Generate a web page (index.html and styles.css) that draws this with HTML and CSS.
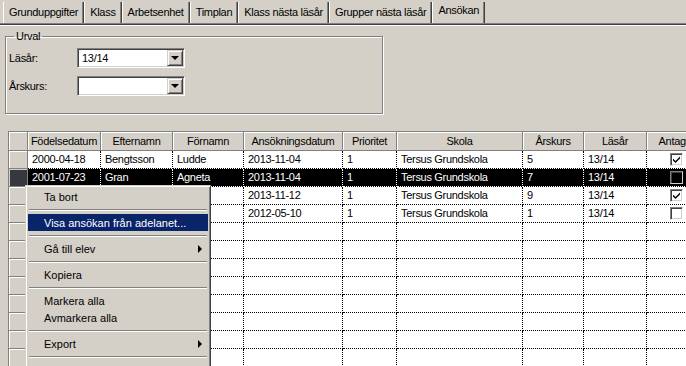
FILE: index.html
```html
<!DOCTYPE html>
<html lang="sv">
<head>
<meta charset="UTF-8">
<title>Ansökan</title>
<link rel="stylesheet" href="styles.css">
</head>
<body>
<div class="tabs">
  <span class="tab">Grunduppgifter</span>
  <span class="tab">Klass</span>
  <span class="tab">Arbetsenhet</span>
  <span class="tab">Timplan</span>
  <span class="tab">Klass nästa läsår</span>
  <span class="tab">Grupper nästa läsår</span>
  <span class="tab tab-active">Ansökan</span>
</div>

<div class="page">
  <fieldset class="urval">
    <legend>Urval</legend>
    <div class="field">
      <label>Läsår:</label>
      <div class="combo"><span class="combo-text">13/14</span><span class="combo-btn"></span></div>
    </div>
    <div class="field">
      <label>Årskurs:</label>
      <div class="combo"><span class="combo-text"></span><span class="combo-btn"></span></div>
    </div>
  </fieldset>

  <div class="grid">
    <div class="row head">
      <div class="sel"></div>
      <div>Födelsedatum</div>
      <div>Efternamn</div>
      <div>Förnamn</div>
      <div>Ansökningsdatum</div>
      <div>Prioritet</div>
      <div>Skola</div>
      <div>Årskurs</div>
      <div>Läsår</div>
      <div>Antaget</div>
    </div>
    <div class="row">
      <div class="sel"></div>
      <div>2000-04-18</div><div>Bengtsson</div><div>Ludde</div><div>2013-11-04</div>
      <div>1</div><div>Tersus Grundskola</div><div>5</div><div>13/14</div>
      <div class="center"><span class="chk checked"><svg width="9" height="9" viewBox="0 0 9 9"><path d="M1 3.5 L3.5 6 L8 1.5 L8 3.5 L3.5 8 L1 5.5 Z" fill="#000"/></svg></span></div>
    </div>
    <div class="row selected">
      <div class="sel"></div>
      <div>2001-07-23</div><div>Gran</div><div>Agneta</div><div>2013-11-04</div>
      <div>1</div><div>Tersus Grundskola</div><div>7</div><div>13/14</div>
      <div class="center"><span class="chk"></span></div>
    </div>
    <div class="row">
      <div class="sel"></div>
      <div>2004-02-11</div><div>Ek</div><div>Ola</div><div>2013-11-12</div>
      <div>1</div><div>Tersus Grundskola</div><div>9</div><div>13/14</div>
      <div class="center"><span class="chk checked"><svg width="9" height="9" viewBox="0 0 9 9"><path d="M1 3.5 L3.5 6 L8 1.5 L8 3.5 L3.5 8 L1 5.5 Z" fill="#000"/></svg></span></div>
    </div>
    <div class="row">
      <div class="sel"></div>
      <div>2012-01-20</div><div>Lind</div><div>Eva</div><div>2012-05-10</div>
      <div>1</div><div>Tersus Grundskola</div><div>1</div><div>13/14</div>
      <div class="center"><span class="chk"></span></div>
    </div>
    <div class="row"><div class="sel"></div><div></div><div></div><div></div><div></div><div></div><div></div><div></div><div></div><div></div></div>
    <div class="row"><div class="sel"></div><div></div><div></div><div></div><div></div><div></div><div></div><div></div><div></div><div></div></div>
    <div class="row"><div class="sel"></div><div></div><div></div><div></div><div></div><div></div><div></div><div></div><div></div><div></div></div>
    <div class="row"><div class="sel"></div><div></div><div></div><div></div><div></div><div></div><div></div><div></div><div></div><div></div></div>
    <div class="row"><div class="sel"></div><div></div><div></div><div></div><div></div><div></div><div></div><div></div><div></div><div></div></div>
    <div class="row"><div class="sel"></div><div></div><div></div><div></div><div></div><div></div><div></div><div></div><div></div><div></div></div>
    <div class="row"><div class="sel"></div><div></div><div></div><div></div><div></div><div></div><div></div><div></div><div></div><div></div></div>
    <div class="row"><div class="sel"></div><div></div><div></div><div></div><div></div><div></div><div></div><div></div><div></div><div></div></div>
  </div>
</div>

<!-- kontextmeny över listan -->
<div class="menu">
  <div class="menu-item">Ta bort</div>
  <div class="menu-sep"></div>
  <div class="menu-item hl">Visa ansökan från adelanet...</div>
  <div class="menu-sep"></div>
  <div class="menu-item">Gå till elev<span class="arrow"></span></div>
  <div class="menu-sep"></div>
  <div class="menu-item">Kopiera</div>
  <div class="menu-sep"></div>
  <div class="menu-item">Markera alla</div>
  <div class="menu-item">Avmarkera alla</div>
  <div class="menu-sep"></div>
  <div class="menu-item">Export<span class="arrow"></span></div>
  <div class="menu-sep"></div>
  <div class="menu-item">Utskrift<span class="arrow"></span></div>
</div>
</body>
</html>
```

FILE: styles.css
```css
body {
  margin: 0;
  width: 686px;
  height: 366px;
  overflow: hidden;
  position: relative;
  background: #d4d0c8;
  font-family: "Liberation Sans", Arial, sans-serif;
  font-size: 11px;
  letter-spacing: -0.3px;
  color: #000;
}

/* flikar */
.tabs {
  display: flex;
  height: 21px;
  padding: 2px 0 0 3px;
  border-bottom: 1px solid #808080;
  box-shadow: 0 1px 0 #404040, 0 2px 0 #fff;
}
.tab {
  padding: 0 5px;
  line-height: 20px;
  border-left: 1px solid #fff;
  border-right: 1px solid #404040;
  box-shadow: inset -1px 0 0 #808080;
  white-space: nowrap;
}
.tab-active {
  line-height: 17px;
  padding-bottom: 3px;
}

.page {
  padding: 6px 0 0 5px;
}

/* urval */
.urval {
  width: 378px;
  box-sizing: border-box;
  margin: 0;
  padding: 5px 0 17px 3px;
  border: 1px solid #808080;
  box-shadow: inset 1px 1px 0 #fff, 1px 1px 0 #fff;
}
.urval legend {
  padding: 0 2px;
  margin-left: 5px;
  line-height: 13px;
}
.field {
  display: flex;
  align-items: center;
  margin-bottom: 8px;
}
.field:last-child {
  margin-bottom: 0;
}
.field label {
  width: 68px;
}
.combo {
  display: flex;
  width: 108px;
  height: 20px;
  box-sizing: border-box;
  padding: 1px;
  background: #fff;
  border: 1px solid;
  border-color: #808080 #fff #fff #808080;
  box-shadow: inset 1px 1px 0 #404040, inset -1px -1px 0 #d4d0c8;
}
.combo-text {
  flex: 1;
  padding-left: 3px;
  line-height: 16px;
}
.combo-btn {
  width: 16px;
  box-sizing: border-box;
  display: flex;
  align-items: center;
  justify-content: center;
  background: #d4d0c8;
  border: 1px solid;
  border-color: #d4d0c8 #404040 #404040 #d4d0c8;
  box-shadow: inset 1px 1px 0 #fff, inset -1px -1px 0 #808080;
}
.combo-btn::after {
  content: "";
  border-top: 4px solid #000;
  border-left: 4px solid transparent;
  border-right: 4px solid transparent;
}

/* lista */
.grid {
  margin: 17px 0 0 3px;
  width: 700px;
  background: #fff;
  border-top: 1px solid #808080;
  border-left: 1px solid #808080;
}
.row {
  display: grid;
  grid-template-columns: 19px 73px 72px 71px 99px 54px 126px 61px 63px 60px;
  height: 18px;
}
.row > div {
  box-sizing: border-box;
  padding-left: 4px;
  line-height: 17px;
  white-space: nowrap;
  overflow: hidden;
  border-right: 1px dotted #000;
  border-bottom: 1px dotted #000;
}
.row.head {
  height: 19px;
}
.row.head > div {
  padding-left: 0;
  line-height: 18px;
  text-align: center;
  background: #d4d0c8;
  border-right: 1px solid #808080;
  border-bottom: 1px solid #808080;
  box-shadow: inset 1px 1px 0 #fff;
}
.row > .sel {
  padding: 0;
  background: #d4d0c8;
  border-right: 1px solid #808080;
  border-bottom: 1px solid #808080;
  box-shadow: inset 1px 1px 0 #fff;
}
.row.selected > div {
  background: #000;
  color: #fff;
  border-color: #fff;
}
.row.selected > .sel {
  background: #35393e;
  border-color: #808080;
  box-shadow: inset 1px 1px 0 #d4d0c8;
}
.row > .center {
  padding-left: 0;
  display: flex;
  align-items: center;
  justify-content: center;
}
.chk {
  display: flex;
  align-items: center;
  justify-content: center;
  width: 13px;
  height: 13px;
  box-sizing: border-box;
  background: #fff;
  border: 1px solid;
  border-color: #808080 #fff #fff #808080;
  box-shadow: inset 1px 1px 0 #404040, inset -1px -1px 0 #d4d0c8;
}
.row.selected .chk {
  background: #000;
  border-color: #808080 #d4d0c8 #d4d0c8 #808080;
  box-shadow: inset 1px 1px 0 #404040;
}

/* kontextmeny */
.menu {
  position: absolute;
  left: 25px;
  top: 185px;
  width: 186px;
  box-sizing: border-box;
  padding: 2px;
  background: #d4d0c8;
  border: 1px solid;
  border-color: #d4d0c8 #404040 #404040 #d4d0c8;
  box-shadow: inset 1px 1px 0 #fff, inset -1px -1px 0 #808080;
  letter-spacing: 0;
}
.menu-item {
  display: flex;
  justify-content: space-between;
  align-items: center;
  height: 17px;
  padding: 0 6px 0 16px;
  white-space: nowrap;
}
.menu-item.hl {
  background: #0a246a;
  color: #fff;
}
.menu-sep {
  display: flex;
  align-items: center;
  height: 9px;
  padding: 0 1px;
}
.menu-sep::before {
  content: "";
  flex: 1;
  border-top: 1px solid #808080;
  border-bottom: 1px solid #fff;
}
.arrow {
  border-left: 4px solid #000;
  border-top: 4px solid transparent;
  border-bottom: 4px solid transparent;
}
```
